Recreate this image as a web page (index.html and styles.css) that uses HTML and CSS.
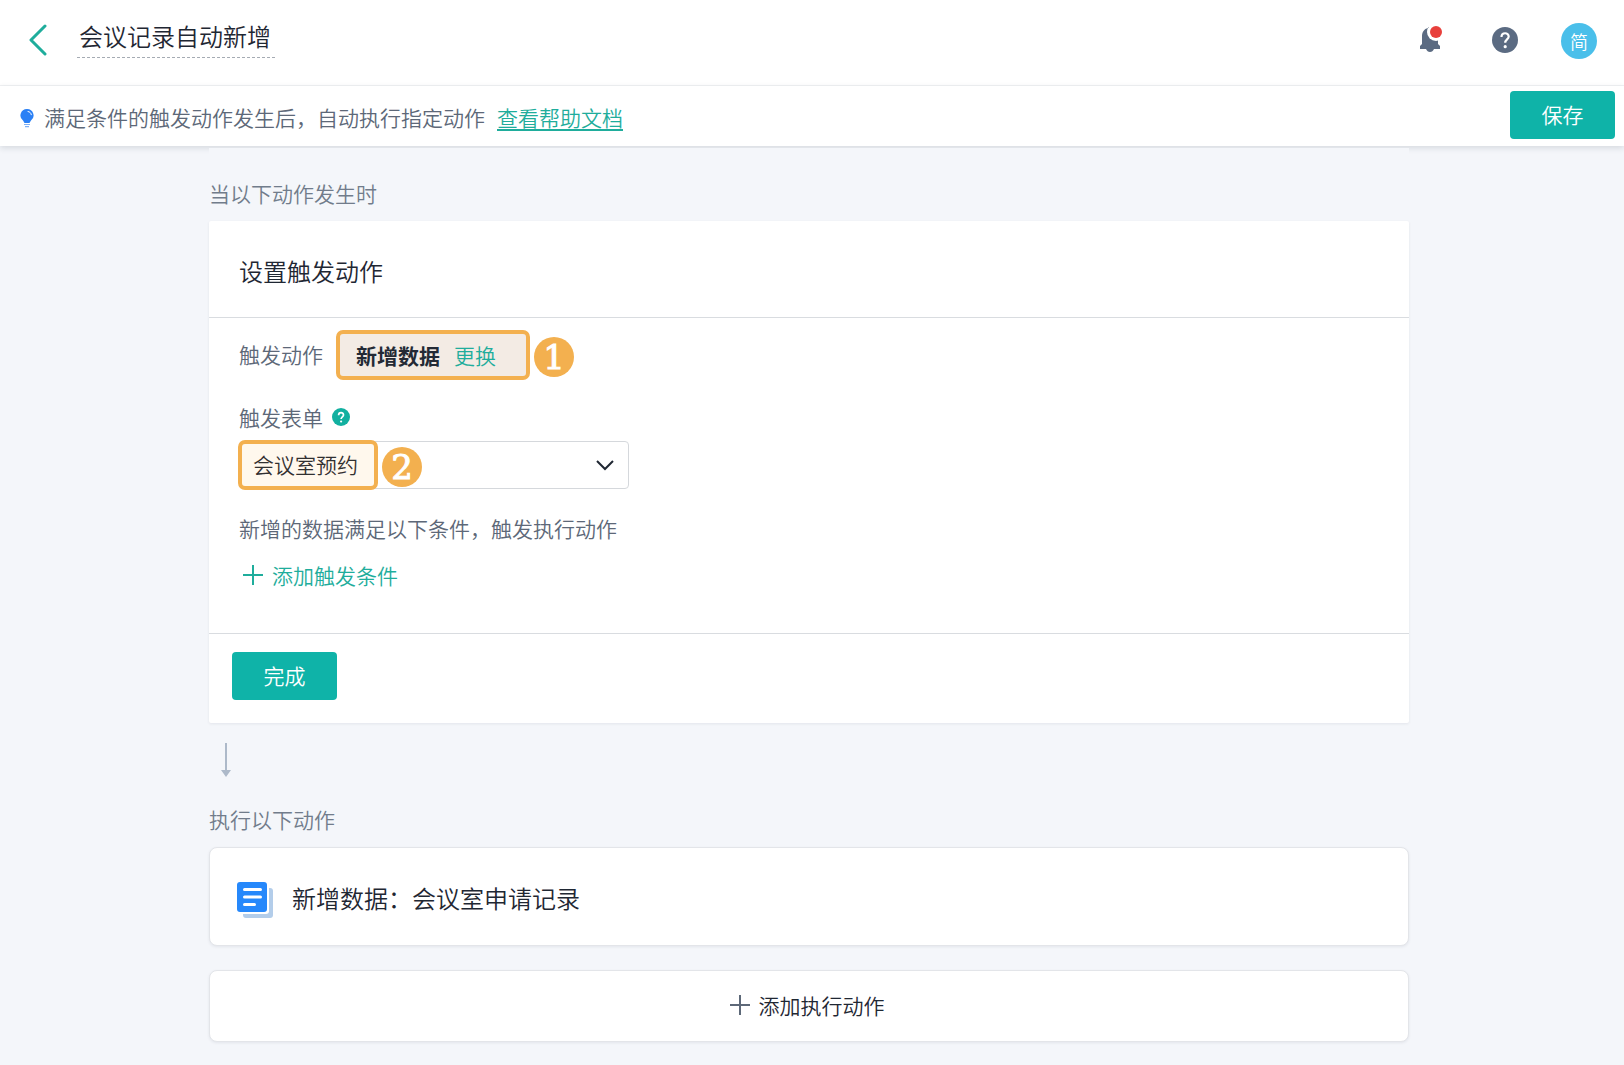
FILE: index.html
```html
<!DOCTYPE html>
<html lang="zh-CN">
<head>
<meta charset="utf-8">
<meta name="viewport" content="width=device-width, initial-scale=1">
<title>会议记录自动新增</title>
<link rel="stylesheet" href="styles.css">
</head>
<body>
<header class="topbar">
  <button class="icon-btn back" type="button" aria-label="返回">
    <svg width="20" height="32" viewBox="0 0 20 32" fill="none" stroke="#1fad9c" stroke-width="3" stroke-linecap="round" stroke-linejoin="round"><path d="M17 2 3 16l14 14"/></svg>
  </button>
  <input class="title" type="text" value="会议记录自动新增" aria-label="名称">
  <div class="tools">
    <button class="icon-btn" type="button" aria-label="通知">
      <svg width="28" height="32" viewBox="0 0 28 32"><path fill="#5b6b82" d="M4 25v-3l2-2v-8c0-4 2-7 6-8V3h4v1c4 1 6 4 6 8v8l2 2v3h-6c-1 2-2 3-4 3s-3-1-4-3z"/><circle cx="20" cy="8" r="9" fill="#fff"/><circle cx="20" cy="8" r="6" fill="#e8403c"/></svg>
    </button>
    <button class="icon-btn" type="button" aria-label="帮助">
      <svg width="26" height="26" viewBox="0 0 26 26"><circle cx="13" cy="13" r="13" fill="#5b6b82"/><path d="M9.500 10c0-5 7.200-4.800 7.200-.5 0 2.800-3.500 3-3.500 6.300" fill="none" stroke="#fff" stroke-width="2.200"/><circle cx="13.200" cy="19.700" r="1.600" fill="#fff"/></svg>
    </button>
    <button class="avatar" type="button">简</button>
  </div>
</header>
<div class="notice">
  <svg class="bulb" width="14" height="19" viewBox="0 0 14 19"><path d="M7 0a6.500 6.500 0 0 1 3.800 11.800L9.500 14h-5l-1.300-2.200A6.500 6.500 0 0 1 7 0z" fill="#2b80f5"/><path d="M8 2.500c2 .3 3 1.500 3.300 3.200" stroke="#fff" fill="none" stroke-linecap="round"/><path d="M4 15h6v1H4zM5 17h4v1.200H5z" fill="#7fb0f5"/></svg>
  <p class="notice-text">满足条件的触发动作发生后，自动执行指定动作</p>
  <a class="help-link" href="#">查看帮助文档</a>
  <button class="btn save" type="button">保存</button>
</div>
<main class="page">
  <div class="column">
    <h2 class="section-label">当以下动作发生时</h2>
    <section class="card">
      <h3 class="card-title">设置触发动作</h3>
      <div class="card-body">
        <div class="trigger">
          <span class="trigger-label">触发动作</span>
          <div class="chip"><strong>新增数据</strong><a class="change" href="#">更换</a></div>
          <span class="badge">1</span>
        </div>
        <div class="field-label">
          <label for="form">触发表单</label>
          <svg width="18" height="18" viewBox="0 0 18 18"><circle cx="9" cy="9" r="9" fill="#12b0a0"/><path d="M6.600 7.200c0-3.400 4.900-3.200 4.900-.3 0 1.900-2.400 2-2.400 4.200" fill="none" stroke="#fff" stroke-width="1.700"/><circle cx="9.100" cy="13.500" r="1.100" fill="#fff"/></svg>
        </div>
        <div class="select-wrap">
          <select id="form" class="select"><option>会议室预约</option></select>
          <svg class="chevron" width="18" height="12" viewBox="0 0 18 12" fill="none" stroke="#1f2733" stroke-width="2"><path d="m1 2 8 8 8-8"/></svg>
          <div class="marker"><span class="frame"></span><span class="badge">2</span></div>
        </div>
        <p class="hint">新增的数据满足以下条件，触发执行动作</p>
        <button class="add add-condition" type="button">
          <svg width="20" height="20" viewBox="0 0 20 20" stroke="currentColor" stroke-width="2"><path d="M10 0v20M0 10h20"/></svg>添加触发条件
        </button>
      </div>
      <div class="card-footer"><button class="btn" type="button">完成</button></div>
    </section>
    <svg class="arrow" width="10" height="34" viewBox="0 0 10 34"><path d="M4 0h2v27h4l-5 7-5-7h4z" fill="#adb9c9"/></svg>
    <h2 class="section-label">执行以下动作</h2>
    <section class="card action">
      <svg width="36" height="36" viewBox="0 0 36 36"><rect x="6" y="6" width="30" height="30" rx="3" fill="#b3cdea"/><rect x="-2" y="-2" width="34" height="34" rx="3" fill="#fff"/><rect width="30" height="30" rx="3" fill="#2688fb"/><path d="M7.500 7.500h16M7.500 15h16M7.500 22.500h10" stroke="#fff" stroke-width="3" stroke-linecap="round"/></svg>
      <h3 class="action-title">新增数据：会议室申请记录</h3>
    </section>
    <button class="card add add-action" type="button">
      <svg width="20" height="20" viewBox="0 0 20 20" stroke="#5d6878" stroke-width="2"><path d="M10 0v20M0 10h20"/></svg>添加执行动作
    </button>
  </div>
</main>
</body>
</html>
```
FILE: styles.css
```css
* { box-sizing: border-box; }

body {
  margin: 0;
  min-height: 100vh;
  background: #f4f6fa;
  color: #1f2733;
  font: 350 21px/32px "Noto Sans CJK SC DemiLight", "Noto Sans CJK SC", sans-serif;
}

h2, h3, p { margin: 0; font-weight: inherit; }
button, input, select { font: inherit; color: inherit; }
button { padding: 0; border: 0; background: none; cursor: pointer; }
svg { display: block; flex: none; }

.topbar {
  display: flex;
  align-items: center;
  height: 86px;
  padding: 0 27px 6px 28px;
  background: #fff;
  border-bottom: 1px solid #f1f2f4;
}
.title {
  width: 198px;
  height: 40px;
  margin: 0 0 4px 29px;
  padding: 0 2px 4px;
  border: 0;
  border-bottom: 1px dashed #a5abb3;
  background: none;
  font-size: 24px;
}
.tools { display: flex; align-items: center; margin-left: auto; }
.tools .icon-btn { margin-right: 48px; }
.tools .icon-btn + .icon-btn { margin-right: 43px; }
.avatar {
  width: 36px;
  height: 36px;
  margin-top: 2px;
  border-radius: 50%;
  background: #4abfea;
  color: #fff;
  font-size: 18px;
}

.notice {
  display: flex;
  align-items: center;
  height: 60px;
  padding: 0 9px 0 20px;
  background: #fff;
  color: #5d6878;
  box-shadow: 0 2px 6px rgba(30, 40, 60, .14);
}
.bulb { margin-top: 4px; }
.notice-text { margin: 2px 12px 0 10px; }
.help-link {
  margin-top: 2px;
  color: #1fad9c;
  text-decoration-thickness: 2px;
  text-underline-offset: 3px;
}
.btn {
  width: 105px;
  height: 48px;
  padding-bottom: 2px;
  border-radius: 4px;
  background: #0fb3a8;
  color: #fff;
}
.save { margin: 0 0 2px auto; }

.page { padding: 2px 215px 24px 209px; }
.column { padding-top: 29px; background: #f4f6fa; }
.section-label { margin-bottom: 12px; font-size: 21px; color: #717c8b; }

.card {
  background: #fff;
  border-radius: 2px;
  box-shadow: 0 1px 3px rgba(30, 40, 60, .08);
}
.card-title { padding: 34px 30px 30px; border-bottom: 1px solid #d9dce0; font-size: 24px; }
.card-body { padding: 12px 30px 42px; border-bottom: 1px solid #d9dce0; color: #5d6878; }
.card-footer { padding: 18px 23px 23px; }
.card-footer .btn { display: block; }

.trigger { display: flex; align-items: center; }
.trigger-label { padding-bottom: 2px; }
.chip {
  display: flex;
  align-items: center;
  gap: 14px;
  width: 194px;
  height: 50px;
  margin: 0 4px 0 13px;
  padding-left: 16px;
  border: 4px solid #f3b04f;
  border-radius: 7px;
  background: #f3ebe4;
}
.chip strong { color: #242a35; font-family: "Noto Sans CJK SC", sans-serif; font-weight: 700; }
.change { color: #1fad9c; text-decoration: none; }
.badge {
  display: grid;
  place-items: center;
  width: 40px;
  height: 40px;
  margin-top: 4px;
  border-radius: 50%;
  background: #f3b04f;
  color: #fff;
  font: 400 34px/40px "DejaVu Serif", serif;
  -webkit-text-stroke: 1px #fff;
}

.field-label { display: flex; align-items: center; gap: 9px; margin: 21px 0 8px; }
.select-wrap { position: relative; width: 390px; }
.select {
  display: block;
  width: 100%;
  height: 48px;
  padding: 0 13px 2px;
  border: 1px solid #d5d8dc;
  border-radius: 4px;
  background: #fff;
  color: #1f2733;
  appearance: none;
}
.chevron { position: absolute; right: 15px; top: 18px; pointer-events: none; }
.marker {
  position: absolute;
  left: -1px;
  top: -1px;
  display: flex;
  align-items: center;
  gap: 4px;
  pointer-events: none;
}
.frame {
  width: 140px;
  height: 50px;
  border: 4px solid #f3b04f;
  border-radius: 7px;
  background: rgba(255, 160, 30, .08);
}
.hint { margin: 23px 0 15px; }
.add { display: flex; align-items: center; gap: 9px; }
.add-condition { padding-left: 4px; color: #1fad9c; }

.arrow { margin: 20px 0 26px 12px; }
.action, .add-action { border: 1px solid #e3e5e9; border-radius: 8px; }
.action { display: flex; align-items: center; gap: 19px; padding: 34px 27px 27px; }
.action-title { padding-bottom: 4px; font-size: 24px; }
.add-action { justify-content: center; width: 100%; height: 72px; margin-top: 24px; padding: 0 4px 2px 0; }
```
